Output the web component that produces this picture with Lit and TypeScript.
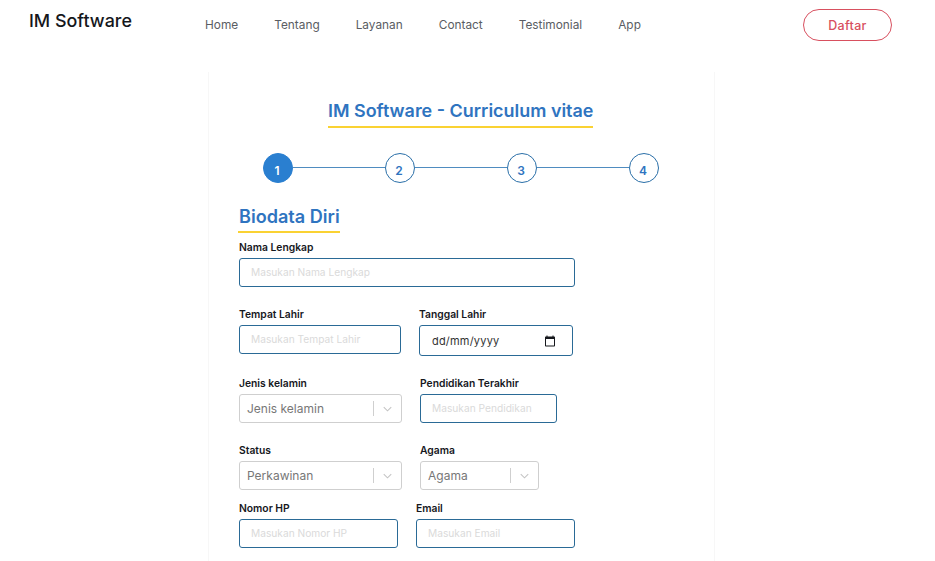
import { LitElement, html, css, svg } from 'lit';
import { customElement } from 'lit/decorators.js';

const chevron = svg`<path d="M1 1l5 5 5-5" fill="none" stroke="#c4c4c4" stroke-width="1.4" />`;
const calendar = svg`<path d="M20 3h-1V1h-2v2H7V1H5v2H4c-1.1 0-2 .9-2 2v16c0 1.1.9 2 2 2h16c1.1 0 2-.9 2-2V5c0-1.1-.9-2-2-2zm0 18H4V8h16v13z" fill="#16181d" />`;

@customElement('app-root')
export class AppRoot extends LitElement {
  static override styles = css`
    :host {
      display: block;
      height: 561px;
      overflow: hidden;
      background: #fff;
      font-family: Inter, Roboto, sans-serif;
      color: #16181d;
    }

    /* Header */
    .header {
      display: flex;
      align-items: flex-start;
      height: 72px;
      padding: 9px 43px 0 29px;
      box-sizing: border-box;
    }
    .logo {
      width: 176px;
      font-size: 17.9px;
      font-weight: 500;
      line-height: 24px;
      white-space: nowrap;
      color: #15171c;
    }
    .nav {
      display: flex;
      gap: 36px;
      flex: 1;
      padding-top: 7px;
      font-size: 11.85px;
      line-height: 18px;
      color: #5a5d63;
    }
    .btn {
      width: 89px;
      height: 32px;
      box-sizing: border-box;
      border: 1px solid #d8505f;
      border-radius: 16px;
      display: flex;
      align-items: center;
      justify-content: center;
      font-size: 12.5px;
      font-weight: 500;
      letter-spacing: 0.3px;
      color: #d8505f;
    }

    /* Card */
    .card {
      width: 507px;
      height: 489px;
      margin-left: 208px;
      box-sizing: border-box;
      padding-left: 30px;
      border-left: 1px solid #f7f7f7;
      border-right: 1px solid #f7f7f7;
    }
    .title-wrap {
      display: flex;
      padding: 27px 0 0 89px;
    }
    .title {
      width: 265px;
      height: 27px;
      border-bottom: 2px solid #fad232;
      text-align: center;
      white-space: nowrap;
      font-size: 17.95px;
      font-weight: 600;
      line-height: 24px;
      color: #2f74c0;
    }

    /* Stepper */
    .stepper {
      display: flex;
      align-items: center;
      width: 396px;
      margin: 25px 0 0 24px;
    }
    .step {
      flex: none;
      width: 30px;
      height: 30px;
      box-sizing: border-box;
      border: 1px solid #2a6fa8;
      border-radius: 50%;
      display: flex;
      align-items: center;
      justify-content: center;
      padding: 4px 2px 0 0;
      font-size: 12px;
      font-weight: 600;
      color: #2f74c0;
    }
    .step.active {
      background: #2a7fd0;
      border-color: #2a7fd0;
      color: #fff;
    }
    .line {
      flex: 1;
      height: 1px;
      margin-top: -2px;
      background: #4f8cc0;
    }

    /* Form */
    .section {
      height: 30px;
      box-sizing: border-box;
      width: 102px;
      margin: 20px 0 0 -1px;
      padding-left: 1px;
      border-bottom: 2px solid #fad232;
      white-space: nowrap;
      font-size: 18.1px;
      font-weight: 600;
      line-height: 26px;
      color: #2f74c0;
    }
    .row {
      display: flex;
      align-items: flex-start;
      gap: 18px;
      margin-top: 20px;
    }
    .row.first { margin-top: 7px; }
    .row.fifth { margin-top: 11px; }
    .field {
      display: flex;
      flex-direction: column;
    }
    label {
      height: 18px;
      font-size: 10.3px;
      font-weight: 600;
      line-height: 14px;
      white-space: nowrap;
      color: #16181d;
    }

    input {
      height: 29px;
      box-sizing: border-box;
      border: 1px solid #2a6a96;
      border-radius: 3px;
      padding: 0 11px 1px;
      font-family: inherit;
      font-size: 10.2px;
      color: #333;
      background: #fff;
      outline: none;
    }
    input::placeholder { color: #dadada; }
    .date {
      height: 31px;
      box-sizing: border-box;
      border: 1px solid #2a6a96;
      border-radius: 3px;
      padding: 0 15px 0 12px;
      display: flex;
      align-items: center;
      justify-content: space-between;
      font-size: 11px;
      letter-spacing: 0.2px;
      color: #333;
    }
    .date svg { width: 12px; height: 12px; margin-right: 1px; }
    .select {
      height: 29px;
      box-sizing: border-box;
      border: 1px solid #cfcfcf;
      border-radius: 3px;
      display: flex;
      align-items: center;
      font-size: 12px;
      color: #777;
      background: #fff;
    }
    .select span { flex: 1; padding: 0 0 1px 7px; }
    .select i {
      width: 1px;
      height: 15px;
      background: #cfcfcf;
    }
    .select svg { width: 9px; height: 6px; margin: 1px 9px 0 9px; }

    .w-full { width: 336px; }
    .w-162 { width: 162px; }
    .w-163 { width: 163px; }
    .w-154 { width: 154px; }
    .w-137 { width: 137px; }
    .w-119 { width: 119px; }
    .w-159 { width: 159px; }
  `;

  private _input(label: string, placeholder: string, width: string) {
    return html`
      <div class="field">
        <label>${label}</label>
        <input class=${width} type="text" placeholder=${placeholder} />
      </div>
    `;
  }

  private _select(label: string, value: string, width: string) {
    return html`
      <div class="field">
        <label>${label}</label>
        <div class="select ${width}">
          <span>${value}</span>
          <i></i>
          <svg viewBox="0 0 12 7">${chevron}</svg>
        </div>
      </div>
    `;
  }

  override render() {
    return html`
      <header class="header">
        <div class="logo">IM Software</div>
        <nav class="nav">
          <span>Home</span>
          <span>Tentang</span>
          <span>Layanan</span>
          <span>Contact</span>
          <span>Testimonial</span>
          <span>App</span>
        </nav>
        <div class="btn">Daftar</div>
      </header>

      <main class="card">
        <div class="title-wrap"><div class="title">IM Software - Curriculum vitae</div></div>

        <div class="stepper">
          <div class="step active">1</div>
          <div class="line"></div>
          <div class="step">2</div>
          <div class="line"></div>
          <div class="step">3</div>
          <div class="line"></div>
          <div class="step">4</div>
        </div>

        <div class="section">Biodata Diri</div>

        <div class="row first">
          ${this._input('Nama Lengkap', 'Masukan Nama Lengkap', 'w-full')}
        </div>
        <div class="row">
          ${this._input('Tempat Lahir', 'Masukan Tempat Lahir', 'w-162')}
          <div class="field">
            <label>Tanggal Lahir</label>
            <div class="date w-154">
              <span>dd/mm/yyyy</span>
              <svg viewBox="0 0 24 24">${calendar}</svg>
            </div>
          </div>
        </div>
        <div class="row">
          ${this._select('Jenis kelamin', 'Jenis kelamin', 'w-163')}
          ${this._input('Pendidikan Terakhir', 'Masukan Pendidikan', 'w-137')}
        </div>
        <div class="row">
          ${this._select('Status', 'Perkawinan', 'w-163')}
          ${this._select('Agama', 'Agama', 'w-119')}
        </div>
        <div class="row fifth">
          ${this._input('Nomor HP', 'Masukan Nomor HP', 'w-159')}
          ${this._input('Email', 'Masukan Email', 'w-159')}
        </div>
      </main>
    `;
  }
}
